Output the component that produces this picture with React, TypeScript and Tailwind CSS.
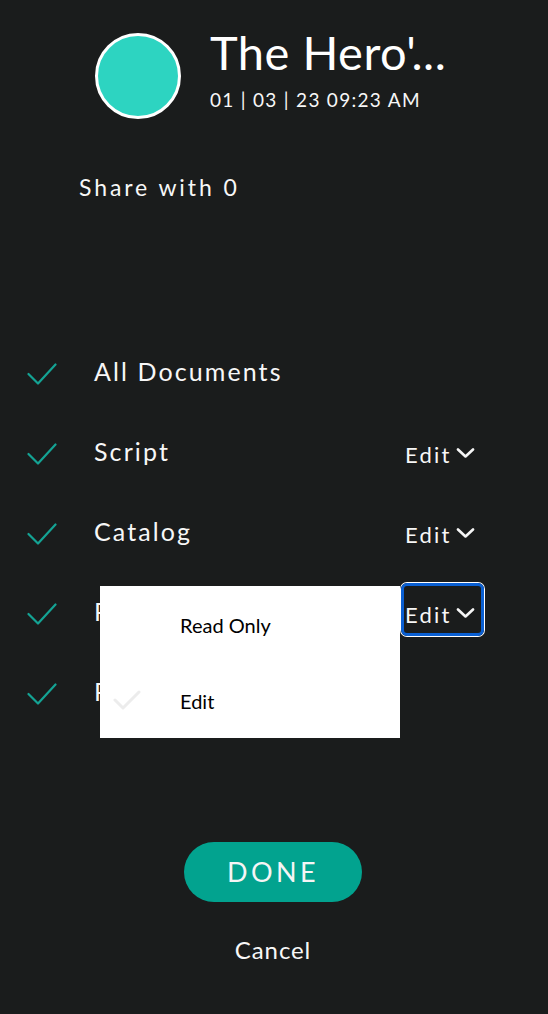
import React from 'react';

const rows = [
  { name: 'All Documents', edit: false },
  { name: 'Script', edit: true },
  { name: 'Catalog', edit: true },
  { name: 'Props', edit: true, focused: true },
  { name: 'Photos', edit: false },
];

const Check = ({ className }: { className?: string }) => (
  <svg width="30" height="23" viewBox="0 0 30 23" fill="none" className={className}>
    <polyline points="1.5,11 11,20.5 28.5,1.5" stroke="#14a394" strokeWidth="2.2" strokeLinecap="round" strokeLinejoin="round" />
  </svg>
);

const Chevron = () => (
  <svg width="19" height="10" viewBox="0 0 19 10" fill="none">
    <polyline points="2,1.5 9.5,8.5 17,1.5" stroke="#f5f5f5" strokeWidth="2.6" strokeLinecap="round" strokeLinejoin="round" />
  </svg>
);

export default function App() {
  return (
    <div className="relative w-[548px] h-[1014px] overflow-hidden bg-[#1a1c1c] text-[#f7f7f7] font-['Lato',sans-serif]">
      <div className="flex items-start pt-[29px] pl-[95px] gap-[29px]">
        <div className="mt-[4px] w-[86px] h-[86px] rounded-full bg-[#2dd4c1] border-[3px] border-white shrink-0" />
        <div className="flex flex-col">
          <div className="text-[47px] leading-[46px] text-white tracking-[0.5px]">The Hero'...</div>
          <div className="mt-[15px] text-[19px] leading-[19px] tracking-[1.3px]">01 | 03 | 23 09:23 AM</div>
        </div>
      </div>

      <div className="mt-[57px] pl-[79px] text-[23px] leading-[23px] tracking-[2.9px]">Share with 0</div>

      <div className="mt-[132px] flex flex-col">
        {rows.map((r) => (
          <div key={r.name} className="h-[80px] flex items-center">
            <Check className="ml-[27px] mt-[6px] shrink-0" />
            <div className="ml-[37px] flex-1 text-[25px] leading-[25px] tracking-[2.1px]">{r.name}</div>
            <div className="w-[143px] shrink-0">
              {r.edit && (
                <div className="relative inline-flex items-center gap-[4px] mt-[10px]">
                  {r.focused && (
                    <span className="absolute top-[-21px] bottom-[-10px] left-[-4px] right-[-9px] rounded-[6px] border-[3px] border-[#0a5fd2] ring-1 ring-white" />
                  )}
                  <span className="relative text-[22px] leading-[22px] tracking-[2.2px]">Edit</span>
                  <span className="relative mt-[-3px]"><Chevron /></span>
                </div>
              )}
            </div>
          </div>
        ))}
      </div>

      <button className="mt-[111px] ml-[184px] w-[178px] h-[60px] rounded-full bg-[#02a38f] text-[27px] tracking-[3.4px] text-[#f5f5f5] flex items-center justify-center">
        DONE
      </button>
      <div className="mt-[36px] text-center text-[24px] leading-[24px] tracking-[0.9px] pr-[2px]">Cancel</div>

      <div className="absolute left-[100px] top-[586px] w-[300px] h-[152px] bg-white text-black">
        <div className="absolute left-[80px] top-[27px] text-[20px] leading-[24px]">Read Only</div>
        <svg className="absolute left-[13px] top-[104px]" width="28" height="20" viewBox="0 0 28 20" fill="none">
          <polyline points="2,10 10,18 26,2" stroke="#ececec" strokeWidth="3" strokeLinecap="round" strokeLinejoin="round" />
        </svg>
        <div className="absolute left-[80px] top-[103px] text-[20px] leading-[24px]">Edit</div>
      </div>
    </div>
  );
}
